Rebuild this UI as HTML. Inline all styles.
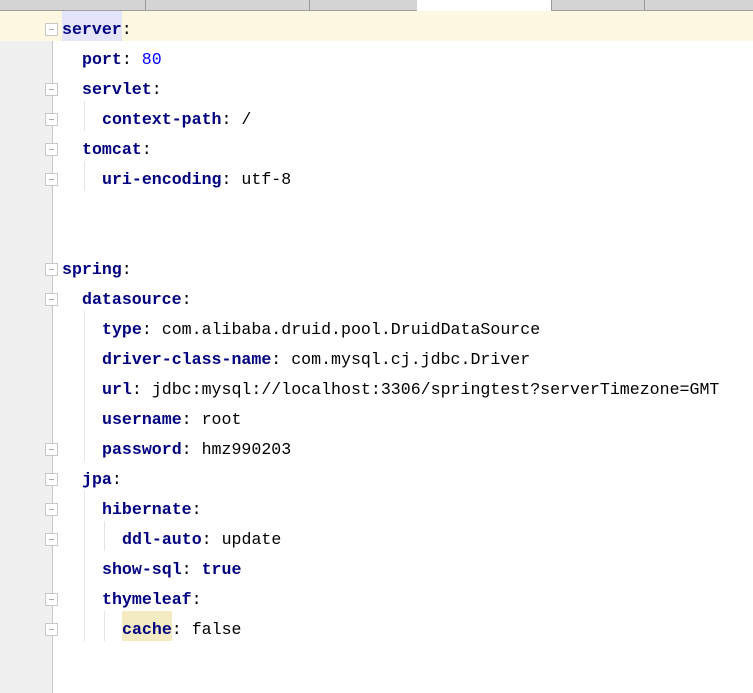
<!DOCTYPE html>
<html><head><style>
body{margin:0;width:753px;height:693px;overflow:hidden;background:#fff;position:relative;font-family:"Liberation Mono",monospace}
.tabs{position:absolute;left:0;top:0;width:753px;height:10px;background:#d4d4d4;border-bottom:1px solid #a0a0a0}
.sep{position:absolute;top:0;height:10px;width:1px;background:#999}
.gut{position:absolute;left:0;top:11px;width:52px;height:682px;background:#f0f0f0;border-right:1px solid #c8c8c8}
.cur{position:absolute;left:0;top:11px;width:753px;height:30px;background:#fef8e2}
.l{position:absolute;height:30px;line-height:30px;font-size:16.6px;white-space:pre;color:#000}
.k{color:#000080;font-weight:bold}
.n{color:#0000ff}
.g{position:absolute;width:1px;background:#e4e4e4}
.f{position:absolute;left:45px;width:13px;height:13px;border:1px solid #c8c8c8;background:#fff;box-sizing:border-box}
.f:after{content:"";position:absolute;left:3px;top:5px;width:5px;height:1px;background:#aaa}
</style></head><body>
<div class="tabs"></div>
<div class="sep" style="left:145px"></div><div class="sep" style="left:309px"></div>
<div style="position:absolute;left:417px;top:0;width:134px;height:11px;background:#fff"></div>
<div class="sep" style="left:551px"></div><div class="sep" style="left:644px"></div>
<div class="gut"></div>
<div class="cur"></div>
<div style="position:absolute;left:62px;top:11px;width:60px;height:30px;background:#e4e4fb"></div>
<div style="position:absolute;left:122px;top:611px;width:50px;height:30px;background:#f5ebc3"></div>
<div class="g" style="left:84px;top:101px;height:30px"></div>
<div class="g" style="left:84px;top:161px;height:30px"></div>
<div class="g" style="left:84px;top:311px;height:150px"></div>
<div class="g" style="left:84px;top:491px;height:150px"></div>
<div class="g" style="left:104px;top:521px;height:30px"></div>
<div class="g" style="left:104px;top:611px;height:30px"></div>
<div class="f" style="top:23px"></div>
<div class="f" style="top:83px"></div><div class="f" style="top:113px"></div>
<div class="f" style="top:143px"></div><div class="f" style="top:173px"></div>
<div class="f" style="top:263px"></div>
<div class="f" style="top:293px"></div><div class="f" style="top:443px"></div>
<div class="f" style="top:473px"></div><div class="f" style="top:623px"></div>
<div class="f" style="top:503px"></div><div class="f" style="top:533px"></div>
<div class="f" style="top:593px"></div>
<div class="l" style="left:62px;top:15px"><span class="k">server</span>:</div>
<div class="l" style="left:82px;top:45px"><span class="k">port</span>: <span class="n">80</span></div>
<div class="l" style="left:82px;top:75px"><span class="k">servlet</span>:</div>
<div class="l" style="left:102px;top:105px"><span class="k">context-path</span>: /</div>
<div class="l" style="left:82px;top:135px"><span class="k">tomcat</span>:</div>
<div class="l" style="left:102px;top:165px"><span class="k">uri-encoding</span>: utf-8</div>
<div class="l" style="left:62px;top:255px"><span class="k">spring</span>:</div>
<div class="l" style="left:82px;top:285px"><span class="k">datasource</span>:</div>
<div class="l" style="left:102px;top:315px"><span class="k">type</span>: com.alibaba.druid.pool.DruidDataSource</div>
<div class="l" style="left:102px;top:345px"><span class="k">driver-class-name</span>: com.mysql.cj.jdbc.Driver</div>
<div class="l" style="left:102px;top:375px"><span class="k">url</span>: jdbc:mysql://localhost:3306/springtest?serverTimezone=GMT</div>
<div class="l" style="left:102px;top:405px"><span class="k">username</span>: root</div>
<div class="l" style="left:102px;top:435px"><span class="k">password</span>: hmz990203</div>
<div class="l" style="left:82px;top:465px"><span class="k">jpa</span>:</div>
<div class="l" style="left:102px;top:495px"><span class="k">hibernate</span>:</div>
<div class="l" style="left:122px;top:525px"><span class="k">ddl-auto</span>: update</div>
<div class="l" style="left:102px;top:555px"><span class="k">show-sql</span>: <span class="k">true</span></div>
<div class="l" style="left:102px;top:585px"><span class="k">thymeleaf</span>:</div>
<div class="l" style="left:122px;top:615px"><span class="k">cache</span>: false</div>
</body></html>
